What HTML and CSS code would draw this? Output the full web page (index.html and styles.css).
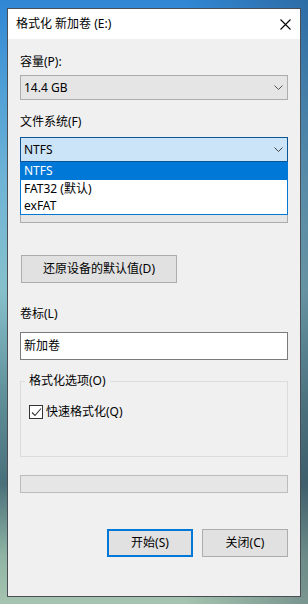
FILE: index.html
```html
<!DOCTYPE html>
<html lang="zh-CN">
<head>
<meta charset="utf-8">
<title>格式化 新加卷 (E:)</title>
<link rel="stylesheet" href="styles.css">
</head>
<body>
<div class="window">
  <div class="titlebar">
    <span class="title">格式化 新加卷 (E:)</span>
    <svg class="close" width="11" height="11" viewBox="0 0 11 11"><path d="M0.5 0.5 L10.5 10.5 M10.5 0.5 L0.5 10.5" stroke="#000" stroke-width="1.1" fill="none"/></svg>
  </div>
  <div class="content">
    <div class="label l1">容量(P):</div>
    <div class="combo c1"><span>14.4 GB</span><svg class="chev" width="9" height="5" viewBox="0 0 9 5"><path d="M0.5 0.5 L4.5 4.5 L8.5 0.5" stroke="#555" stroke-width="1" fill="none"/></svg></div>
    <div class="label l2">文件系统(F)</div>
    <div class="combo-wrap">
      <div class="combo focused"><span>NTFS</span><svg class="chev" width="9" height="5" viewBox="0 0 9 5"><path d="M0.5 0.5 L4.5 4.5 L8.5 0.5" stroke="#444" stroke-width="1" fill="none"/></svg></div>
      <ul class="dropdown">
        <li class="sel">NTFS</li>
        <li>FAT32 (默认)</li>
        <li>exFAT</li>
      </ul>
    </div>
    <div class="label l3"></div>
    <div class="combo c3"></div>
    <button class="btn restore">还原设备的默认值(D)</button>
    <div class="label l4">卷标(L)</div>
    <div class="input">新加卷</div>
    <div class="group">
      <span class="legend">格式化选项(O)</span>
      <div class="check">
        <span class="box"><svg width="11" height="11" viewBox="0 0 11 11"><path d="M1 5.5 L4 8.5 L10 1.5" stroke="#333" stroke-width="1.1" fill="none"/></svg></span>
        <span>快速格式化(Q)</span>
      </div>
    </div>
    <div class="progress"></div>
    <div class="actions">
      <button class="btn primary">开始(S)</button>
      <button class="btn">关闭(C)</button>
    </div>
  </div>
</div>
</body>
</html>
```
FILE: styles.css
```css
* { box-sizing: border-box; }
html, body { margin: 0; padding: 0; }
body {
  width: 308px;
  height: 604px;
  overflow: hidden;
  font-family: "Noto Sans", "Noto Sans CJK SC", sans-serif;
  font-size: 12px;
  color: #000;
  background:
    linear-gradient(90deg, rgba(120,190,210,0.0) 0%, rgba(0,0,0,0) 60%, rgba(40,60,80,0.35) 100%),
    linear-gradient(180deg, #2f86d4 0%, #4a9bd6 12%, #6fb4d6 30%, #86c0cc 48%, #5f8f98 66%, #49707a 80%, #8fb4a4 92%, #a6c4b0 100%);
  padding: 8px 0 0 7px;
}
.window {
  width: 294px;
  height: 589px;
  border: 1px solid #4a4f55;
  background: #f0f0f0;
  display: flex;
  flex-direction: column;
}
.titlebar {
  height: 30px;
  background: #fff;
  display: flex;
  align-items: center;
  justify-content: space-between;
  padding: 0 8px 0 8px;
  flex-shrink: 0;
}
.title { line-height: 16px; }
.close { display: block; margin-right: 1px; }
.content {
  padding-left: 12px;
  display: flex;
  flex-direction: column;
  align-items: flex-start;
}
.label { line-height: 16px; height: 16px; }
.l1 { margin-top: 15px; }
.l2 { margin-top: 14px; }
.l3 { margin-top: 14px; }
.l4 { margin-top: 23px; }
.combo {
  width: 268px;
  height: 25px;
  border: 1px solid #adadad;
  background: #e5e5e5;
  display: flex;
  align-items: center;
  justify-content: space-between;
  padding: 0 4px 0 3px;
  line-height: 16px;
}
.chev { display: block; }
.c1 { margin-top: 5px; }
.c3 { margin-top: 6px; }
.combo-wrap { position: relative; margin-top: 7px; }
.combo.focused { background: #cce4f7; border-color: #0a5596; }
.dropdown {
  position: absolute;
  top: 25px;
  left: 0;
  width: 268px;
  margin: 0;
  padding: 0;
  list-style: none;
  background: #fff;
  border: 1px solid #0078d7;
  border-top: 0;
  z-index: 2;
}
.dropdown li {
  height: 17px;
  line-height: 17px;
  padding-left: 3px;
}
.dropdown li.sel { background: #0078d7; color: #fff; height: 18px; line-height: 18px; }
.btn {
  font: inherit;
  color: #000;
  height: 28px;
  border: 1px solid #adadad;
  background: #e1e1e1;
  padding: 0;
  line-height: 16px;
}
.restore { margin-top: 32px; margin-left: 1px; width: 156px; }
.input {
  margin-top: 10px;
  width: 268px;
  height: 28px;
  border: 1px solid #7a7a7a;
  background: #fff;
  display: flex;
  align-items: center;
  padding-left: 3px;
  line-height: 16px;
}
.group {
  position: relative;
  margin-top: 21px;
  width: 268px;
  height: 76px;
  border: 1px solid #dcdcdc;
  padding: 23px 0 0 8px;
}
.legend {
  position: absolute;
  top: -9px;
  left: 4px;
  padding: 0 4px;
  background: #f0f0f0;
  line-height: 16px;
}
.check { display: flex; align-items: center; gap: 3px; line-height: 16px; height: 14px; }
.box {
  width: 14px;
  height: 14px;
  border: 1px solid #333;
  background: #fff;
  display: flex;
  align-items: center;
  justify-content: center;
}
.box svg { display: block; }
.progress {
  margin-top: 18px;
  width: 268px;
  height: 18px;
  border: 1px solid #bcbcbc;
  background: #e6e6e6;
}
.actions {
  margin-top: 36px;
  width: 268px;
  display: flex;
  justify-content: flex-end;
  gap: 9px;
}
.actions .btn { width: 86px; }
.btn.primary { border: 2px solid #0078d7; }
```
